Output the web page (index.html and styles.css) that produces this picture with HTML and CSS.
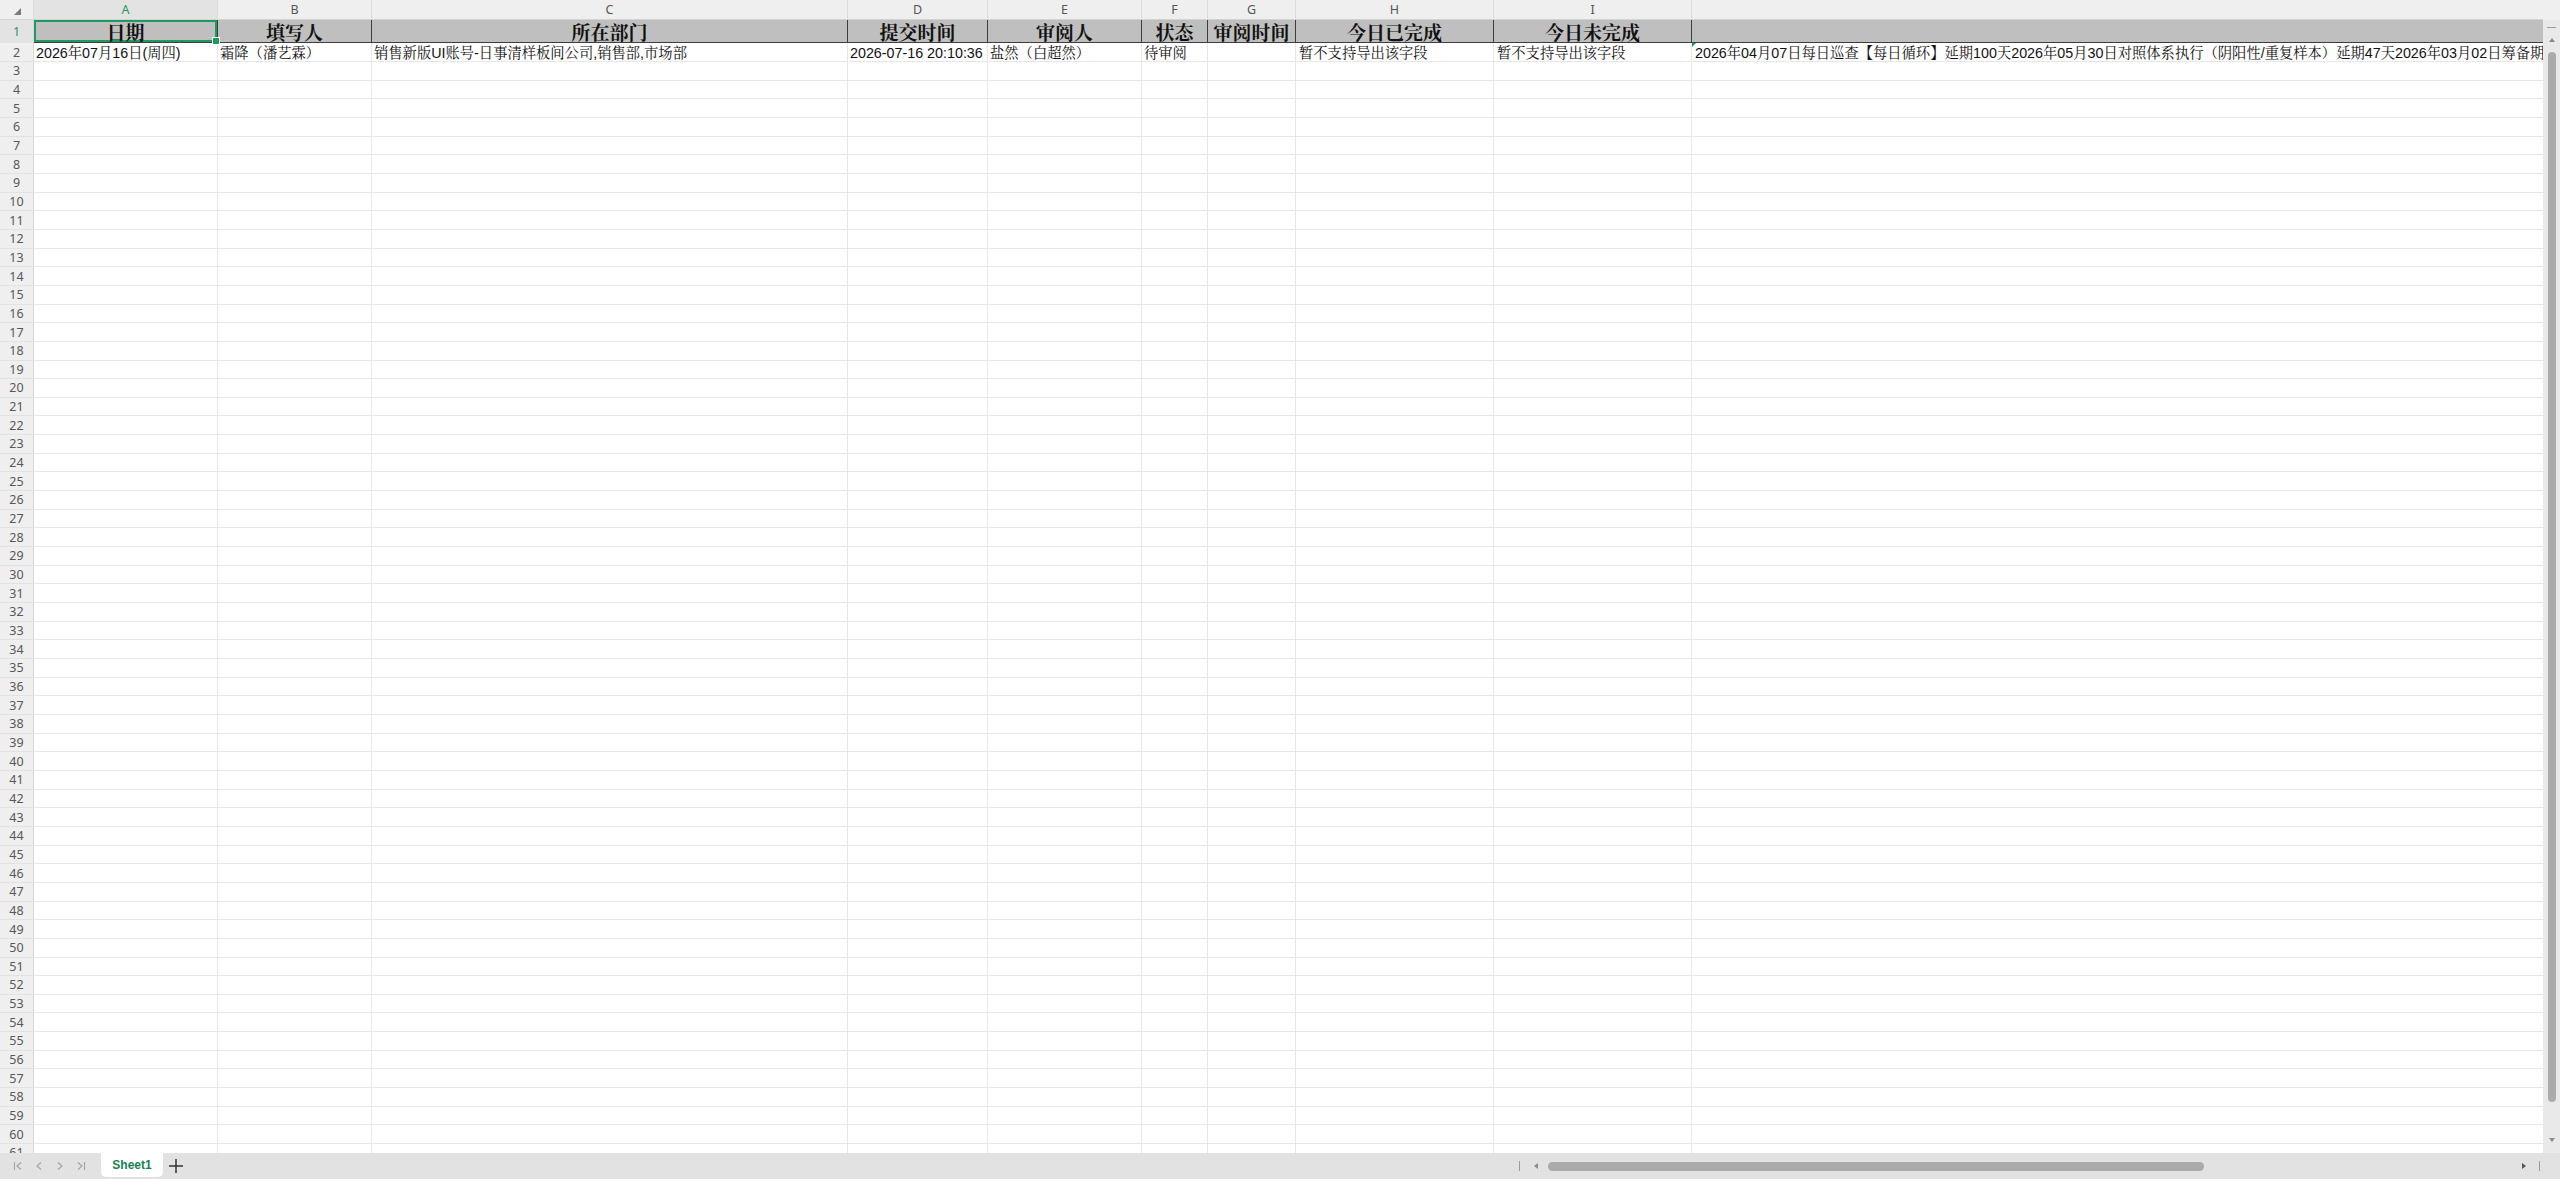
FILE: index.html
```html
<!DOCTYPE html>
<html lang="zh-CN">
<head>
<meta charset="utf-8">
<title>Sheet1</title>
<link rel="stylesheet" href="styles.css">
</head>
<body>
<div class="workbook">
  <div class="sheet">
    <div class="grid-wrap">
      <table class="grid">
        <colgroup>
          <col class="c-rn"><col class="c-a"><col class="c-b"><col class="c-c"><col class="c-d"><col class="c-e"><col class="c-f"><col class="c-g"><col class="c-h"><col class="c-i"><col class="c-j">
        </colgroup>
        <thead>
          <tr class="col-heads">
            <th class="corner"><svg class="corner-tri" width="7" height="7" viewBox="0 0 7 7"><polygon points="7,0 7,7 0,7" fill="#7a7a7a"/></svg></th>
            <th class="sel">A</th><th>B</th><th>C</th><th>D</th><th>E</th><th>F</th><th>G</th><th>H</th><th>I</th><th></th>
          </tr>
        </thead>
        <tbody>
          <tr class="r1">
            <th class="rn sel">1</th>
            <td class="hd active">日期</td><td class="hd">填写人</td><td class="hd">所在部门</td><td class="hd">提交时间</td><td class="hd">审阅人</td><td class="hd">状态</td><td class="hd">审阅时间</td><td class="hd">今日已完成</td><td class="hd">今日未完成</td><td class="hd"></td>
          </tr>
          <tr class="r2">
            <th class="rn">2</th>
            <td>2026年07月16日(周四)</td><td>霜降（潘艺霖）</td><td>销售新版UI账号-日事清样板间公司,销售部,市场部</td><td>2026-07-16 20:10:36</td><td>盐然（白超然）</td><td>待审阅</td><td></td><td class="pl">暂不支持导出该字段</td><td class="pl">暂不支持导出该字段</td><td class="note">2026年04月07日每日巡查【每日循环】延期100天2026年05月30日对照体系执行（阴阳性/重复样本）延期47天2026年03月02日筹备期</td>
          </tr>
          <tr><th class="rn">3</th><td></td><td></td><td></td><td></td><td></td><td></td><td></td><td></td><td></td><td></td></tr>
          <tr><th class="rn">4</th><td></td><td></td><td></td><td></td><td></td><td></td><td></td><td></td><td></td><td></td></tr>
          <tr><th class="rn">5</th><td></td><td></td><td></td><td></td><td></td><td></td><td></td><td></td><td></td><td></td></tr>
          <tr><th class="rn">6</th><td></td><td></td><td></td><td></td><td></td><td></td><td></td><td></td><td></td><td></td></tr>
          <tr><th class="rn">7</th><td></td><td></td><td></td><td></td><td></td><td></td><td></td><td></td><td></td><td></td></tr>
          <tr><th class="rn">8</th><td></td><td></td><td></td><td></td><td></td><td></td><td></td><td></td><td></td><td></td></tr>
          <tr><th class="rn">9</th><td></td><td></td><td></td><td></td><td></td><td></td><td></td><td></td><td></td><td></td></tr>
          <tr><th class="rn">10</th><td></td><td></td><td></td><td></td><td></td><td></td><td></td><td></td><td></td><td></td></tr>
          <tr><th class="rn">11</th><td></td><td></td><td></td><td></td><td></td><td></td><td></td><td></td><td></td><td></td></tr>
          <tr><th class="rn">12</th><td></td><td></td><td></td><td></td><td></td><td></td><td></td><td></td><td></td><td></td></tr>
          <tr><th class="rn">13</th><td></td><td></td><td></td><td></td><td></td><td></td><td></td><td></td><td></td><td></td></tr>
          <tr><th class="rn">14</th><td></td><td></td><td></td><td></td><td></td><td></td><td></td><td></td><td></td><td></td></tr>
          <tr><th class="rn">15</th><td></td><td></td><td></td><td></td><td></td><td></td><td></td><td></td><td></td><td></td></tr>
          <tr><th class="rn">16</th><td></td><td></td><td></td><td></td><td></td><td></td><td></td><td></td><td></td><td></td></tr>
          <tr><th class="rn">17</th><td></td><td></td><td></td><td></td><td></td><td></td><td></td><td></td><td></td><td></td></tr>
          <tr><th class="rn">18</th><td></td><td></td><td></td><td></td><td></td><td></td><td></td><td></td><td></td><td></td></tr>
          <tr><th class="rn">19</th><td></td><td></td><td></td><td></td><td></td><td></td><td></td><td></td><td></td><td></td></tr>
          <tr><th class="rn">20</th><td></td><td></td><td></td><td></td><td></td><td></td><td></td><td></td><td></td><td></td></tr>
          <tr><th class="rn">21</th><td></td><td></td><td></td><td></td><td></td><td></td><td></td><td></td><td></td><td></td></tr>
          <tr><th class="rn">22</th><td></td><td></td><td></td><td></td><td></td><td></td><td></td><td></td><td></td><td></td></tr>
          <tr><th class="rn">23</th><td></td><td></td><td></td><td></td><td></td><td></td><td></td><td></td><td></td><td></td></tr>
          <tr><th class="rn">24</th><td></td><td></td><td></td><td></td><td></td><td></td><td></td><td></td><td></td><td></td></tr>
          <tr><th class="rn">25</th><td></td><td></td><td></td><td></td><td></td><td></td><td></td><td></td><td></td><td></td></tr>
          <tr><th class="rn">26</th><td></td><td></td><td></td><td></td><td></td><td></td><td></td><td></td><td></td><td></td></tr>
          <tr><th class="rn">27</th><td></td><td></td><td></td><td></td><td></td><td></td><td></td><td></td><td></td><td></td></tr>
          <tr><th class="rn">28</th><td></td><td></td><td></td><td></td><td></td><td></td><td></td><td></td><td></td><td></td></tr>
          <tr><th class="rn">29</th><td></td><td></td><td></td><td></td><td></td><td></td><td></td><td></td><td></td><td></td></tr>
          <tr><th class="rn">30</th><td></td><td></td><td></td><td></td><td></td><td></td><td></td><td></td><td></td><td></td></tr>
          <tr><th class="rn">31</th><td></td><td></td><td></td><td></td><td></td><td></td><td></td><td></td><td></td><td></td></tr>
          <tr><th class="rn">32</th><td></td><td></td><td></td><td></td><td></td><td></td><td></td><td></td><td></td><td></td></tr>
          <tr><th class="rn">33</th><td></td><td></td><td></td><td></td><td></td><td></td><td></td><td></td><td></td><td></td></tr>
          <tr><th class="rn">34</th><td></td><td></td><td></td><td></td><td></td><td></td><td></td><td></td><td></td><td></td></tr>
          <tr><th class="rn">35</th><td></td><td></td><td></td><td></td><td></td><td></td><td></td><td></td><td></td><td></td></tr>
          <tr><th class="rn">36</th><td></td><td></td><td></td><td></td><td></td><td></td><td></td><td></td><td></td><td></td></tr>
          <tr><th class="rn">37</th><td></td><td></td><td></td><td></td><td></td><td></td><td></td><td></td><td></td><td></td></tr>
          <tr><th class="rn">38</th><td></td><td></td><td></td><td></td><td></td><td></td><td></td><td></td><td></td><td></td></tr>
          <tr><th class="rn">39</th><td></td><td></td><td></td><td></td><td></td><td></td><td></td><td></td><td></td><td></td></tr>
          <tr><th class="rn">40</th><td></td><td></td><td></td><td></td><td></td><td></td><td></td><td></td><td></td><td></td></tr>
          <tr><th class="rn">41</th><td></td><td></td><td></td><td></td><td></td><td></td><td></td><td></td><td></td><td></td></tr>
          <tr><th class="rn">42</th><td></td><td></td><td></td><td></td><td></td><td></td><td></td><td></td><td></td><td></td></tr>
          <tr><th class="rn">43</th><td></td><td></td><td></td><td></td><td></td><td></td><td></td><td></td><td></td><td></td></tr>
          <tr><th class="rn">44</th><td></td><td></td><td></td><td></td><td></td><td></td><td></td><td></td><td></td><td></td></tr>
          <tr><th class="rn">45</th><td></td><td></td><td></td><td></td><td></td><td></td><td></td><td></td><td></td><td></td></tr>
          <tr><th class="rn">46</th><td></td><td></td><td></td><td></td><td></td><td></td><td></td><td></td><td></td><td></td></tr>
          <tr><th class="rn">47</th><td></td><td></td><td></td><td></td><td></td><td></td><td></td><td></td><td></td><td></td></tr>
          <tr><th class="rn">48</th><td></td><td></td><td></td><td></td><td></td><td></td><td></td><td></td><td></td><td></td></tr>
          <tr><th class="rn">49</th><td></td><td></td><td></td><td></td><td></td><td></td><td></td><td></td><td></td><td></td></tr>
          <tr><th class="rn">50</th><td></td><td></td><td></td><td></td><td></td><td></td><td></td><td></td><td></td><td></td></tr>
          <tr><th class="rn">51</th><td></td><td></td><td></td><td></td><td></td><td></td><td></td><td></td><td></td><td></td></tr>
          <tr><th class="rn">52</th><td></td><td></td><td></td><td></td><td></td><td></td><td></td><td></td><td></td><td></td></tr>
          <tr><th class="rn">53</th><td></td><td></td><td></td><td></td><td></td><td></td><td></td><td></td><td></td><td></td></tr>
          <tr><th class="rn">54</th><td></td><td></td><td></td><td></td><td></td><td></td><td></td><td></td><td></td><td></td></tr>
          <tr><th class="rn">55</th><td></td><td></td><td></td><td></td><td></td><td></td><td></td><td></td><td></td><td></td></tr>
          <tr><th class="rn">56</th><td></td><td></td><td></td><td></td><td></td><td></td><td></td><td></td><td></td><td></td></tr>
          <tr><th class="rn">57</th><td></td><td></td><td></td><td></td><td></td><td></td><td></td><td></td><td></td><td></td></tr>
          <tr><th class="rn">58</th><td></td><td></td><td></td><td></td><td></td><td></td><td></td><td></td><td></td><td></td></tr>
          <tr><th class="rn">59</th><td></td><td></td><td></td><td></td><td></td><td></td><td></td><td></td><td></td><td></td></tr>
          <tr><th class="rn">60</th><td></td><td></td><td></td><td></td><td></td><td></td><td></td><td></td><td></td><td></td></tr>
          <tr><th class="rn">61</th><td></td><td></td><td></td><td></td><td></td><td></td><td></td><td></td><td></td><td></td></tr>
        </tbody>
      </table>
    </div>
    <div class="vscroll">
      <div class="vhead"></div>
      <div class="vdash"></div>
      <div class="arrow-up"></div>
      <div class="vthumb"></div>
      <div class="arrow-down"></div>
    </div>
  </div>
  <div class="tabbar">
    <div class="nav">
      <svg class="nav-ico" width="10" height="10" viewBox="0 0 10 10"><path d="M1.5 1v8M8 1.5L4 5l4 3.5" fill="none" stroke="#a3a3a3" stroke-width="1.1"/></svg>
      <svg class="nav-ico" width="10" height="10" viewBox="0 0 10 10"><path d="M7 1.5L3 5l4 3.5" fill="none" stroke="#a3a3a3" stroke-width="1.1"/></svg>
      <svg class="nav-ico" width="10" height="10" viewBox="0 0 10 10"><path d="M3 1.5L7 5l-4 3.5" fill="none" stroke="#a3a3a3" stroke-width="1.1"/></svg>
      <svg class="nav-ico" width="10" height="10" viewBox="0 0 10 10"><path d="M2 1.5L6 5l-4 3.5M8.5 1v8" fill="none" stroke="#a3a3a3" stroke-width="1.1"/></svg>
    </div>
    <div class="tab">Sheet1</div>
    <svg class="add" width="16" height="16" viewBox="0 0 16 16"><path d="M8 1v14M1 8h14" fill="none" stroke="#333" stroke-width="1.5"/></svg>
    <div class="hscroll">
      <div class="hbar"></div>
      <div class="arrow-left"></div>
      <div class="htrack"><div class="hthumb"></div></div>
      <div class="arrow-right"></div>
      <div class="hbar"></div>
    </div>
  </div>
</div>
</body>
</html>
```

FILE: styles.css
```css
* { box-sizing: border-box; }
html, body { margin: 0; padding: 0; }
body {
  width: 2560px;
  height: 1179px;
  overflow: hidden;
  background: #fff;
  font-family: "Noto Sans", "Noto Sans CJK SC", sans-serif;
}
.workbook { display: flex; flex-direction: column; height: 1179px; }
.sheet { display: flex; height: 1153px; overflow: hidden; }
.grid-wrap { flex: 1; overflow: hidden; min-width: 0; }

.grid {
  border-collapse: separate;
  border-spacing: 0;
  table-layout: fixed;
  width: 3492px;
}
.c-rn { width: 34px; }
.c-a { width: 184px; }
.c-b { width: 154px; }
.c-c { width: 476px; }
.c-d { width: 140px; }
.c-e { width: 154px; }
.c-f { width: 66px; }
.c-g { width: 88px; }
.c-h { width: 198px; }
.c-i { width: 198px; }
.c-j { width: 1800px; }

.grid th, .grid td {
  padding: 0;
  overflow: hidden;
  white-space: nowrap;
}

/* column letters */
.col-heads { height: 20px; }
.col-heads th {
  background: #efefef;
  color: #555;
  font: 400 12.5px/19px "Noto Sans", sans-serif;
  text-align: center;
  border-right: 1px solid #dcdcdc;
  border-bottom: 1px solid #d2d2d2;
}
.col-heads th.sel { background: #e3e3e3; color: #1e9a5f; }
.col-heads th.corner { position: relative; }
.corner-tri { position: absolute; left: 14px; top: 8px; }

/* row numbers */
.grid th.rn {
  background: #efefef;
  color: #585858;
  font: 400 12.5px/17px "Noto Sans", sans-serif;
  text-align: center;
  border-right: 1px solid #d8d8d8;
  border-bottom: 1px solid #e2e2e2;
}
.grid th.rn.sel { background: #e3e3e3; color: #1e9a5f; }

/* body rows */
.grid tbody tr { height: 18.67px; }
.grid td {
  border-right: 1px solid #e7e7e7;
  border-bottom: 1px solid #e7e7e7;
  color: #111;
  font-size: 14.3px;
  line-height: 16px;
  font-family: "Liberation Sans", "Noto Serif CJK SC", "Noto Sans CJK SC", sans-serif;
  padding: 2px 0 0 2px;
  vertical-align: top;
}
.grid td.pl { padding-left: 3px; }
.grid td.note { position: relative; padding-left: 3px; }
.grid td.note::before {
  content: "";
  position: absolute;
  left: 0;
  top: 0;
  border-top: 4px solid #1e9a5f;
  border-right: 4px solid transparent;
}

/* header row 1 */
.grid tr.r1 { height: 23px; }
.grid td.hd {
  background: #bfbfbf;
  border-right: 1px solid #3d3d3d;
  border-bottom: 1px solid #3d3d3d;
  font: 700 19px/20px "Noto Serif CJK SC", "Noto Sans CJK SC", serif;
  color: #111;
  text-align: center;
  vertical-align: top;
  padding: 2px 0 0 0;
  overflow: visible;
}
.grid td.active {
  position: relative;
  box-shadow: inset 0 0 0 2px #1e9a5f;
}
.grid td.active::after {
  content: "";
  position: absolute;
  right: -3px;
  bottom: -3px;
  width: 6px;
  height: 6px;
  background: #1e9a5f;
  border: 1px solid #fff;
  z-index: 2;
}

/* vertical scrollbar */
.vscroll {
  width: 17px;
  flex: none;
  background: #e9e9e9;
  display: flex;
  flex-direction: column;
  align-items: center;
}
.vhead { align-self: stretch; height: 20px; background: #efefef; }
.vdash { margin-top: 7px; width: 9px; height: 1px; background: #9c9c9c; }
.arrow-up {
  margin-top: 10px;
  width: 0; height: 0;
  border-left: 3px solid transparent;
  border-right: 3px solid transparent;
  border-bottom: 4px solid #8a8a8a;
}
.vthumb {
  margin-top: 10px;
  width: 8px;
  height: 1050px;
  border-radius: 4px;
  background: #ababab;
}
.arrow-down {
  margin-top: 36px;
  width: 0; height: 0;
  border-left: 3px solid transparent;
  border-right: 3px solid transparent;
  border-top: 4px solid #8a8a8a;
}

/* bottom bar */
.tabbar {
  height: 26px;
  background: #e2e2e2;
  display: flex;
  align-items: center;
}
.nav {
  display: flex;
  align-items: center;
  gap: 11px;
  padding-left: 13px;
  width: 101px;
}
.tab {
  align-self: flex-start;
  width: 62px;
  height: 24px;
  background: #fff;
  border-radius: 0 0 5px 5px;
  color: #17804f;
  font: 700 12px/24px "Liberation Sans", sans-serif;
  text-align: center;
}
.add { margin-left: 5px; }

.hscroll {
  margin-left: auto;
  margin-right: 20px;
  width: 1021px;
  display: flex;
  align-items: center;
}
.hbar { width: 1px; height: 10px; background: #9c9c9c; }
.arrow-left {
  margin-left: 14px;
  width: 0; height: 0;
  border-top: 3px solid transparent;
  border-bottom: 3px solid transparent;
  border-right: 4px solid #8a8a8a;
}
.htrack { flex: 1; margin-left: 10px; margin-right: 9px; }
.hthumb { width: 656px; height: 9px; border-radius: 5px; background: #ababab; }
.arrow-right {
  margin-right: 13px;
  width: 0; height: 0;
  border-top: 3px solid transparent;
  border-bottom: 3px solid transparent;
  border-left: 4px solid #555;
}
```
